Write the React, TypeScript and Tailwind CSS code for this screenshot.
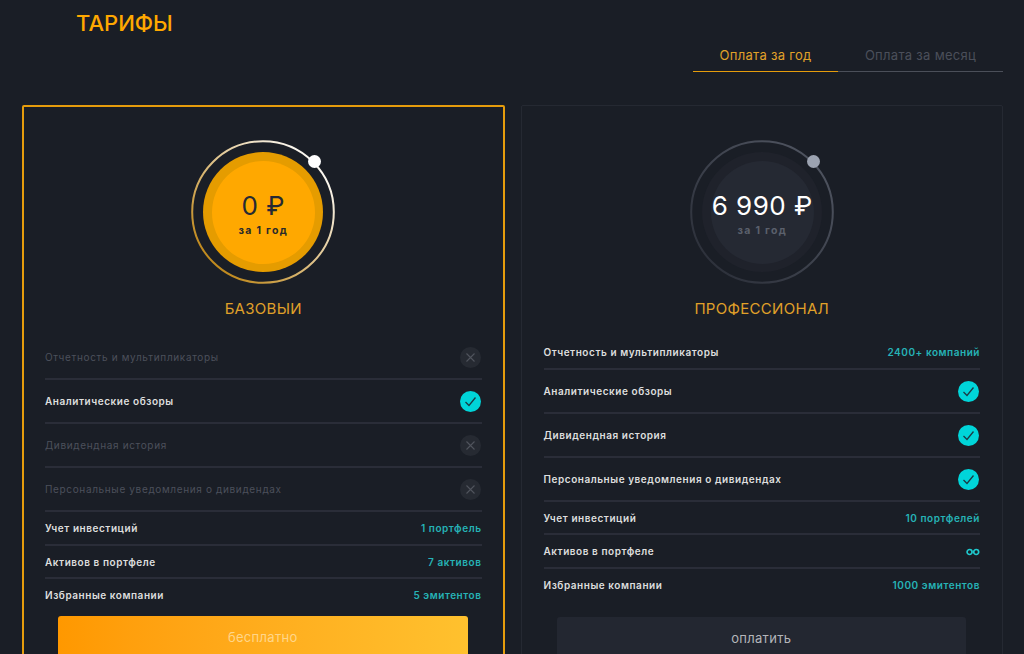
import React from "react";

type Row = { label: string; value?: string; icon?: "check" | "x" | "inf"; muted?: boolean; tall?: boolean };

const basic: Row[] = [
  { label: "Отчетность и мультипликаторы", icon: "x", muted: true, tall: true },
  { label: "Аналитические обзоры", icon: "check", tall: true },
  { label: "Дивидендная история", icon: "x", muted: true, tall: true },
  { label: "Персональные уведомления о дивидендах", icon: "x", muted: true, tall: true },
  { label: "Учет инвестиций", value: "1 портфель" },
  { label: "Активов в портфеле", value: "7 активов" },
  { label: "Избранные компании", value: "5 эмитентов" },
];

const pro: Row[] = [
  { label: "Отчетность и мультипликаторы", value: "2400+ компаний" },
  { label: "Аналитические обзоры", icon: "check", tall: true },
  { label: "Дивидендная история", icon: "check", tall: true },
  { label: "Персональные уведомления о дивидендах", icon: "check", tall: true },
  { label: "Учет инвестиций", value: "10 портфелей" },
  { label: "Активов в портфеле", icon: "inf" },
  { label: "Избранные компании", value: "1000 эмитентов" },
];

function Icon({ kind }: { kind: Row["icon"] }) {
  if (kind === "check") {
    return (
      <span className="mr-[1px] flex h-[21px] w-[21px] items-center justify-center rounded-full bg-[#00d5d9]">
        <svg width="13" height="13" viewBox="0 0 13 13" fill="none">
          <path d="M1.5 7 L5 10.5 L11.5 2.5" stroke="#1c3a44" strokeWidth="1.3" />
        </svg>
      </span>
    );
  }
  if (kind === "x") {
    return (
      <span className="mr-[1px] flex h-[21px] w-[21px] items-center justify-center rounded-full bg-[#262a32]">
        <svg width="11" height="11" viewBox="0 0 11 11" fill="none">
          <path d="M1.5 1.5 L9.5 9.5 M9.5 1.5 L1.5 9.5" stroke="#50545d" strokeWidth="1.1" />
        </svg>
      </span>
    );
  }
  return (
    <svg width="14" height="8" viewBox="0 0 14 8" fill="none">
      <circle cx="3.6" cy="4" r="2.5" stroke="#1fc9cd" strokeWidth="1.7" />
      <circle cx="10.2" cy="4" r="2.5" stroke="#1fc9cd" strokeWidth="1.7" />
    </svg>
  );
}

function Dial({ id, active, price }: { id: string; active: boolean; price: string }) {
  return (
    <div className={`relative flex h-[144px] w-[144px] items-center justify-center ${active ? "" : "ml-[1px]"}`}>
      <svg className="absolute inset-0" width="144" height="144" viewBox="0 0 144 144" fill="none">
        <defs>
          <linearGradient id={id} x1="1" y1="0" x2="0" y2="1">
            {active ? (
              <>
                <stop offset="0.1" stopColor="#ffffff" />
                <stop offset="0.85" stopColor="#c08a1e" />
              </>
            ) : (
              <>
                <stop offset="0.1" stopColor="#4f5460" />
                <stop offset="0.85" stopColor="#2e323c" />
              </>
            )}
          </linearGradient>
        </defs>
        <circle cx="72" cy="72" r="70.8" stroke={`url(#${id})`} strokeWidth="2" />
      </svg>
      <span
        className={`absolute right-[14.5px] top-[15px] h-[13px] w-[13px] rounded-full ${active ? "bg-white" : "bg-[#9ca3b1]"}`}
      />
      <div
        className={`flex h-[120px] w-[120px] items-center justify-center rounded-full ${active ? "bg-[#e59c00]" : "bg-[#1f222b]"}`}
      >
        <div
          className={`flex h-[103px] w-[103px] flex-col items-center justify-center rounded-full pt-[4px] ${active ? "bg-[#ffa800]" : "bg-[#252933]"}`}
        >
          <span className={`text-[26px] leading-[34px] font-normal tracking-[0.5px] ${active ? "text-[#262a33]" : "text-white"}`}>
            {price}
          </span>
          <span
            className={`text-[10.5px] leading-[16px] font-bold tracking-[1.3px] ${active ? "text-[#2a2a2a]" : "text-[#5b606c]"}`}
          >
            за 1 год
          </span>
        </div>
      </div>
    </div>
  );
}

function Rows({ rows, active }: { rows: Row[]; active: boolean }) {
  return (
    <div className="flex flex-col">
      {rows.map((r, i) => {
        const last = i === rows.length - 1;
        return (
          <div
            key={r.label}
            className={`flex items-center justify-between ${r.tall ? "h-[44px]" : "h-[33.5px]"} ${
              last ? "" : "border-b-2 border-[#2a2d38]"
            } ${!last && (!active || !r.tall) ? "pt-[2px]" : ""}`}
          >
            <span
              className={`text-[10px] ${r.muted ? "tracking-[0.65px] text-[#4c505b] font-normal" : "tracking-[0.55px] text-[#dedede] font-semibold"}`}
            >
              {r.label}
            </span>
            {r.value ? (
              <span className="text-[10px] font-semibold tracking-[0.55px] text-[#26b3b6]">{r.value}</span>
            ) : (
              <Icon kind={r.icon} />
            )}
          </div>
        );
      })}
    </div>
  );
}

function Card({
  id,
  active,
  price,
  name,
  rows,
  button,
}: {
  id: string;
  active: boolean;
  price: string;
  name: string;
  rows: Row[];
  button: string;
}) {
  return (
    <div
      className={`flex h-[581px] flex-col rounded-[2px] ${
        active ? "border-2 border-[#e59c0c] px-[21px] pt-[33px]" : "border border-[#252932] px-[22px] pt-[34px]"
      }`}
    >
      <div className="flex flex-col items-center">
        <Dial id={id} active={active} price={price} />
        <div className="mt-[15px] text-[15px] leading-[20px] tracking-[0.3px] text-[#e0a129]">{name}</div>
      </div>
      <div className="mt-[17px]">
        <Rows rows={rows} active={active} />
      </div>
      <div className="mt-auto pl-[13px] pr-[14px]">
        <div
          className={`mb-[24px] flex h-[44px] items-center justify-center rounded-[3px] text-[13px] tracking-[0.3px] ${
            active
              ? "bg-gradient-to-r from-[#ff9800] to-[#ffc12e] text-[#ffd68a]"
              : "bg-[#232731] text-[#b4b6ba]"
          }`}
        >
          {button}
        </div>
      </div>
    </div>
  );
}

export default function App() {
  return (
    <div className="h-[654px] overflow-hidden bg-[#1a1e26] font-['Inter',sans-serif]">
      <div className="h-[36px] pl-[76px] pt-[10px] text-[22px] leading-[26px] font-medium text-[#ffa800]">ТАРИФЫ</div>
      <div className="flex justify-end pr-[21px]">
        <div className="flex h-[36px] w-[310px] text-[13px] tracking-[0.3px]">
          <div className="flex w-[145px] items-center justify-center border-b border-[#e59c0c] pt-[5px] text-[#e0a129]">
            Оплата за год
          </div>
          <div className="flex flex-1 items-center justify-center border-b border-[#4b4f59] pt-[5px] text-[#4b4f5a]">
            Оплата за месяц
          </div>
        </div>
      </div>
      <div className="mt-[33px] grid grid-cols-2 gap-[16px] pl-[22px] pr-[21px]">
        <Card id="g1" active price="0 ₽" name="БАЗОВЫИ" rows={basic} button="бесплатно" />
        <Card id="g2" active={false} price="6 990 ₽" name="ПРОФЕССИОНАЛ" rows={pro} button="оплатить" />
      </div>
    </div>
  );
}
